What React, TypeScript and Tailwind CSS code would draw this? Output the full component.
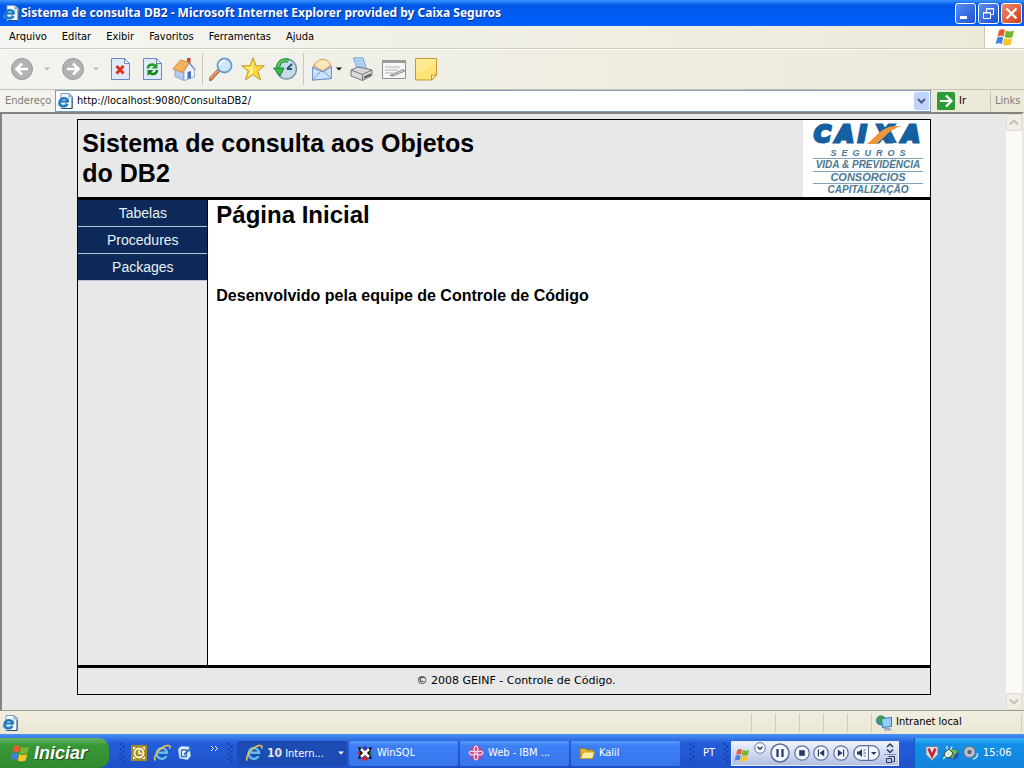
import { useState } from 'react';
import type { ReactNode } from 'react';

const menus = ['Arquivo', 'Editar', 'Exibir', 'Favoritos', 'Ferramentas', 'Ajuda'];
const links = ['Tabelas', 'Procedures', 'Packages'];

function IePageIcon({ className }: { className?: string }) {
  return (
    <svg viewBox="0 0 16 16" className={className} aria-hidden="true">
      <path d="M4 .5h8l3.500 3.500v11.500h-11.500z" fill="#f4f9ff" stroke="#7d9cc4" />
      <path d="M12 .5v3.500h3.500z" fill="#bcd2ee" stroke="#5f82b0" strokeWidth=".7" />
      <path d="M15 5v10.500H5" fill="none" stroke="#274c86" />
      <ellipse cx="6.500" cy="9" rx="6" ry="2.600" fill="none" stroke="#5cb8ee" strokeWidth="1" transform="rotate(-32 6.500 9)" />
      <path d="M10.500 11a4.200 4.200 0 1 1 .3-2.500H4" fill="none" stroke="#1b73b8" strokeWidth="2.200" />
    </svg>
  );
}

function IeIcon() {
  return (
    <svg viewBox="0 0 18 18" className="size-[18px] shrink-0" aria-hidden="true">
      <path d="M13.500 12a5.300 5.300 0 1 1 .6-3.300H5.500" fill="none" stroke="#1c4f9e" strokeWidth="3.800" />
      <path d="M13.500 12a5.300 5.300 0 1 1 .6-3.300H5.500" fill="none" stroke="#62bdf5" strokeWidth="2.500" />
      <path d="M2.500 16.500C-.5 14 6 3.500 14 1.600c3-.7 3.500 1 2.500 3.200" fill="none" stroke="#f0c24c" strokeWidth="1.500" />
    </svg>
  );
}

function WindowsFlag({ className }: { className?: string }) {
  return (
    <svg viewBox="0 0 20 18" className={className} aria-hidden="true">
      <path d="M4 2.500C6 .8 8 .8 10 2L8.500 8.500C6.500 7.300 4.500 7.500 2.500 8.700z" fill="#ea5a2c" />
      <path d="M11 2.500c2.500 1.300 5 1.200 8 0L17.500 9c-2.800 1.300-5.500 1.200-8-.1z" fill="#77b52e" />
      <path d="M2.200 9.800C4.400 8.500 6.300 8.600 8.300 9.700L6.800 16C4.800 14.800 2.700 15 .6 16.300z" fill="#3f83de" />
      <path d="M9.200 10.100c2.600 1.300 5.200 1.300 8 0l-1.500 6.400c-2.700 1.300-5.400 1.200-8-.1z" fill="#f5c32c" />
    </svg>
  );
}

function ToolButton({ label, children }: { label: string; children: ReactNode }) {
  return (
    <button type="button" aria-label={label} className="size-6 shrink-0">
      <svg viewBox="0 0 24 24" className="size-6">
        {children}
      </svg>
    </button>
  );
}

function Arrow({ label, className, fill }: { label: string; className: string; fill: string }) {
  return (
    <button type="button" aria-label={label} className={className}>
      <svg viewBox="0 0 6 4" className="h-[4px] w-[6px]">
        <path d="M0 .5h6L3 3.500z" fill={fill} />
      </svg>
    </button>
  );
}

function Separator() {
  return <div className="mx-1.5 h-8 w-px bg-[#c9c7b8]" />;
}

function TitleBar() {
  return (
    <header className="flex h-[26px] items-center gap-0.5 bg-linear-to-b from-[#3a93ff] via-[#0057e8] via-20% to-[#0060fa] pr-0.5 pl-[3px]">
      <IePageIcon className="size-4 shrink-0" />
      <h1 className="flex-1 truncate font-['Noto_Sans','Open_Sans',sans-serif] text-[12px] leading-5 font-bold text-white [text-shadow:1px_1px_#0a2f8c]">
        Sistema de consulta DB2 - Microsoft Internet Explorer provided by Caixa Seguros
      </h1>
      <div className="flex gap-[2px]">
        <button type="button" aria-label="Minimizar" className="size-[21px] rounded-[3px] border border-white bg-linear-to-br from-[#5b8df5] to-[#1c4fd0]">
          <svg viewBox="0 0 19 19"><path d="M4 12h7v3H4z" fill="#fff" /></svg>
        </button>
        <button type="button" aria-label="Restaurar" className="size-[21px] rounded-[3px] border border-white bg-linear-to-br from-[#5b8df5] to-[#1c4fd0]">
          <svg viewBox="0 0 19 19" fill="none" stroke="#fff">
            <path d="M7.500 8V4.500h7v6H12M7 5h8" />
            <path d="M4.500 8.500h7v6h-7zM4 9h8" />
          </svg>
        </button>
        <button type="button" aria-label="Fechar" className="size-[21px] rounded-[3px] border border-white bg-linear-to-br from-[#ee8a6c] to-[#cf3a14]">
          <svg viewBox="0 0 19 19"><path d="M4.500 4.500l10 10M14.500 4.500l-10 10" stroke="#fff" strokeWidth="2.200" /></svg>
        </button>
      </div>
    </header>
  );
}

function MenuBar() {
  return (
    <div className="flex h-[23px] justify-between border-b border-[#d0cdbb] bg-linear-to-r from-[#f5f5f3] to-[#ece9d8]">
      <nav className="flex gap-[15px] pl-[9px]">
        {menus.map((m) => (
          <button key={m} type="button" className="text-[11px] leading-5">
            {m}
          </button>
        ))}
      </nav>
      <div className="flex w-10 items-center justify-center border-l border-[#c9c7b8] bg-white">
        <WindowsFlag className="h-[18px] w-5" />
      </div>
    </div>
  );
}

function ToolBar() {
  return (
    <div className="flex h-[41px] items-center border-t border-b border-t-white border-b-[#c5c2b2] bg-linear-to-r from-[#f3f3f0] to-[#ece9d8] pb-0.5 pl-[10px]">
      <ToolButton label="Voltar">
        <circle cx="12" cy="12" r="10.500" fill="#b3b3b3" stroke="#979797" />
        <path d="M18 12H7M12 6.500L6.500 12l5.500 5.500" fill="none" stroke="#fff" strokeWidth="2.600" />
      </ToolButton>
      <Arrow label="Histórico de voltar" className="flex w-[26px] items-center justify-center" fill="#bdbdb6" />
      <ToolButton label="Avançar">
        <circle cx="13" cy="12" r="10.500" fill="#b3b3b3" stroke="#979797" />
        <path d="M7 12h11M13 6.500l5.500 5.500-5.500 5.500" fill="none" stroke="#fff" strokeWidth="2.600" />
      </ToolButton>
      <Arrow label="Histórico de avançar" className="flex w-6 items-center justify-center" fill="#bdbdb6" />
      <div className="flex items-center gap-2">
        <ToolButton label="Parar">
          <path d="M3.500 1.500h13l5 5v16h-18z" fill="#dfeafc" stroke="#6d87c4" />
          <path d="M16.500 1.500v5h5z" fill="#fff" stroke="#6d87c4" />
          <path d="M8.500 9l7 7.500M15.500 9l-7 7.500" stroke="#e23219" strokeWidth="3" />
        </ToolButton>
        <ToolButton label="Atualizar">
          <path d="M3.500 1.500h13l5 5v16h-18z" fill="#dfeafc" stroke="#6d87c4" />
          <path d="M16.500 1.500v5h5z" fill="#fff" stroke="#6d87c4" />
          <path d="M8 11.500c0-4 4.500-5 7-3" fill="none" stroke="#22a01f" strokeWidth="2.500" />
          <path d="M17.500 5.500v6h-6z" fill="#22a01f" />
          <path d="M17 13c0 4-4.500 5-7 3" fill="none" stroke="#178215" strokeWidth="2.500" />
          <path d="M7.500 19v-6h6z" fill="#178215" />
        </ToolButton>
        <ToolButton label="Página inicial">
          <path d="M3 11.500l9 3v9L3 19.500z" fill="#b5c9ee" stroke="#8299c8" strokeWidth=".8" />
          <path d="M12 14l5-8 5.500 6v8L12 23.500z" fill="#eef4ff" stroke="#8299c8" strokeWidth=".8" />
          <path d="M15 1h3.500v6H15z" fill="#c5432b" />
          <path d="M.8 12L8.500 3l9 2.300L11 15.500z" fill="#f6b15c" stroke="#c9823a" strokeWidth=".8" />
          <path d="M17 5.500l6.300 7.500" stroke="#7f97c6" strokeWidth="1.600" />
          <path d="M15.500 15l3.500-1v7l-3.500 1.200z" fill="#4773b4" />
        </ToolButton>
      </div>
      <Separator />
      <div className="flex items-center gap-2">
        <ToolButton label="Pesquisar">
          <path d="M1.500 22L10 13" stroke="#a6653c" strokeWidth="4" strokeLinecap="round" />
          <path d="M1.500 21.500L9.500 13" stroke="#e79c6c" strokeWidth="2" strokeLinecap="round" />
          <circle cx="15.500" cy="8.500" r="7" fill="#c9e8fd" stroke="#6e9ccc" strokeWidth="1.800" />
          <path d="M11 8a5 5 0 0 1 5-4.500" fill="none" stroke="#fff" strokeWidth="2" />
        </ToolButton>
        <ToolButton label="Favoritos">
          <path d="M12 .8l3 8h8.300l-6.600 5.400 3 8.900L12 17.600l-7.700 5.500 3-8.900L.7 8.800H9z" fill="#ffd93b" stroke="#c7941c" />
          <path d="M12 4v12l-5 4 2.500-7L4 10h6z" fill="#fff08a" />
        </ToolButton>
        <ToolButton label="Histórico">
          <circle cx="13.500" cy="12" r="10" fill="#c7dce9" stroke="#7896a8" strokeWidth="1.500" />
          <path d="M14 12l5-5M14 12h5" stroke="#31546d" strokeWidth="1.800" />
          <path d="M15.500 4C10 1.500 5.500 5.500 5 10.500" fill="none" stroke="#168634" strokeWidth="4" />
          <path d="M15.500 4C10 1.500 5.500 5.500 5 10.500" fill="none" stroke="#5fcf5c" strokeWidth="2" />
          <path d="M.5 11h10.500L7 19z" fill="#3eb648" stroke="#168634" />
        </ToolButton>
      </div>
      <Separator />
      <ToolButton label="Correio">
        <path d="M2.500 10L12 2l9.500 7v12.500l-19 1.500z" fill="#b2d5fa" stroke="#6c90c8" />
        <path d="M4 9c2-5 6-7 10-6.500 4 .5 6 3 6.500 6L13 14z" fill="#fce7bd" stroke="#d59643" />
        <path d="M2.500 10.500L13 15l8.500-5.500v12l-19 1.500z" fill="#c9e3ff" stroke="#6c90c8" />
        <path d="M3 22.500l8-8.500M21 21l-7.500-7" stroke="#7a9bd0" />
      </ToolButton>
      <Arrow label="Opções de correio" className="flex w-4 items-center pl-0.5" fill="#000" />
      <div className="flex items-center gap-2">
        <ToolButton label="Imprimir">
          <path d="M3.500 1h9.500l3.500 11-9 1z" fill="#bcdcfa" stroke="#6f9fd0" />
          <path d="M6 4h6M7 7h6M8 9.500h6" stroke="#8bb9e4" />
          <path d="M1 13l7-3 14 3v5.500L12.500 23.500 1 19z" fill="#d9d9dd" stroke="#777" />
          <path d="M1 13l11.500 4.500L22 13M12.500 17.500v6" fill="none" stroke="#777" />
          <path d="M14 19.500l7-3v2l-7 3z" fill="#555" />
        </ToolButton>
        <ToolButton label="Editar">
          <path d="M.5 3.500h23v18H.5z" fill="#f7f7f5" stroke="#8e8e8c" />
          <path d="M0 3h24v3H0z" fill="#9b9b9b" />
          <path d="M3 10h15M3 13h13M3 16h8" stroke="#b2b2b0" />
          <path d="M8 18.500l13-6 2 1.500-12 5z" fill="#d5d5d5" stroke="#777" strokeWidth=".8" />
        </ToolButton>
        <ToolButton label="Discutir">
          <path d="M1.500 1.500h21V18l-5 5h-16z" fill="#ffe275" stroke="#c49a2e" />
          <path d="M2 2h20v5L2 17z" fill="#fff0a0" opacity=".6" />
          <path d="M17.500 23v-5h5z" fill="#fff3a8" stroke="#c49a2e" />
        </ToolButton>
      </div>
    </div>
  );
}

function AddressBar() {
  const [url, setUrl] = useState('http://localhost:9080/ConsultaDB2/');
  return (
    <form className="flex h-[22px] items-center bg-linear-to-r from-[#f3f3f0] to-[#ece9d8]" onSubmit={(e) => e.preventDefault()}>
      <label htmlFor="address" className="w-[55px] pl-[5px] text-[11px] leading-5 text-[#7f7c73]">
        Endereço
      </label>
      <div className="flex h-[22px] flex-1 items-center gap-1 border border-[#7f9db9] bg-white pr-px pl-px">
        <IePageIcon className="size-4 shrink-0" />
        <input
          id="address"
          value={url}
          onChange={(e) => setUrl(e.target.value)}
          className="min-w-0 flex-1 text-[11px] leading-5 outline-none"
        />
        <button type="button" aria-label="Endereços recentes" className="h-[18px] w-[15px] rounded-[2px] bg-[#c1d3fb]">
          <svg viewBox="0 0 15 18"><path d="M4 7l3.500 3.500L11 7" fill="none" stroke="#4d6185" strokeWidth="2" /></svg>
        </button>
      </div>
      <button type="submit" className="flex w-[59px] items-center gap-1 pl-[6px] text-[11px] leading-5">
        <svg viewBox="0 0 18 18" className="size-[18px]">
          <rect width="18" height="18" rx="1.500" fill="#2c9a35" />
          <path d="M3 9h11M9 3.500L14.500 9 9 14.500" fill="none" stroke="#fff" strokeWidth="2.200" />
        </svg>
        Ir
      </button>
      <div className="w-[34px] border-l border-[#c5c2b2] pl-1 text-[11px] leading-5 text-[#7f7c73]">Links</div>
    </form>
  );
}

function CaixaLogo() {
  return (
    <svg viewBox="0 0 127 77" className="h-[77px] w-[127px] shrink-0 bg-white" role="img" aria-label="Caixa Seguros">
      <defs>
        <linearGradient id="caixa" x1="0" y1="0" x2="0" y2="1">
          <stop offset="0" stopColor="#1f7fc4" />
          <stop offset="1" stopColor="#0c4590" />
        </linearGradient>
      </defs>
      <g fontFamily="DejaVu Sans, sans-serif" fontWeight="700" fontStyle="italic" fontSize="23" fill="url(#caixa)" stroke="#13609f" strokeWidth="3">
        <text x="11" y="22">C</text>
        <text x="33" y="22">A</text>
        <text x="55" y="22">I</text>
        <text x="72" y="22">X</text>
        <text x="99" y="22">A</text>
      </g>
      <path d="M64 24c8-6 14-17 27-18h7c-10 3-15 10-21 15l-4 3z" fill="#f0953a" />
      <path d="M84 14l4-3 6 12h-6z" fill="#1a68a8" />
      <g fill="#4b7790" fontFamily="Liberation Sans, Arial, sans-serif" fontWeight="700" fontStyle="italic" textAnchor="middle">
        <text x="65" y="36" fontSize="9">S&#160; E&#160; G&#160; U&#160; R&#160; O&#160; S</text>
        <text x="65" y="48" fontSize="10">VIDA &amp; PREVIDÊNCIA</text>
        <text x="65" y="61" fontSize="11">CONSÓRCIOS</text>
        <text x="65" y="73" fontSize="10">CAPITALIZAÇÃO</text>
      </g>
      <path d="M10 38.500h110M10 51.500h110M10 63.500h110" stroke="#7fa3b8" />
    </svg>
  );
}

function ConsultaPage() {
  return (
    <div className="flex flex-1 pt-[5px] pb-[15px]">
      <div className="mx-auto flex w-[85%] flex-col border border-black bg-[#e8e8e8] font-['Liberation_Sans',Arial,sans-serif]">
        <div className="flex justify-between border-b-3 border-black">
          <h2 className="w-[400px] pt-2 pl-1 text-[25px] leading-[30px] font-bold">
            Sistema de consulta aos Objetos do DB2
          </h2>
          <CaixaLogo />
        </div>
        <div className="flex flex-1">
          <nav className="w-[130px] shrink-0 border-r border-black text-center">
            {links.map((l) => (
              <a
                key={l}
                href="#"
                className="block border-b border-[#b8c4d8] bg-[#0d2859] text-[14px] leading-[26px] text-[#e8f4f8]"
              >
                {l}
              </a>
            ))}
          </nav>
          <main className="flex-1 bg-white pl-2">
            <h2 className="text-[24px] leading-[30px] font-bold">Página Inicial</h2>
            <p className="mt-14 text-[16px] leading-5 font-bold">Desenvolvido pela equipe de Controle de Código</p>
          </main>
        </div>
        <footer className="border-t-3 border-black pl-6 text-center font-['DejaVu_Sans',Verdana,sans-serif] text-[11px] leading-[26px]">
          © 2008 GEINF - Controle de Código.
        </footer>
      </div>
    </div>
  );
}

function ScrollBar() {
  return (
    <div className="flex w-4 flex-col justify-between bg-[#fbfaf8]">
      <button type="button" aria-label="Rolar para cima" className="h-[17px] rounded-[2px] border border-[#dedbd0] bg-[#f0eee6]">
        <svg viewBox="0 0 14 15"><path d="M3 9.500L7 5.500l4 4" fill="none" stroke="#c4c2b8" strokeWidth="2" /></svg>
      </button>
      <button type="button" aria-label="Rolar para baixo" className="h-[17px] rounded-[2px] border border-[#dedbd0] bg-[#f0eee6]">
        <svg viewBox="0 0 14 15"><path d="M3 5.500l4 4 4-4" fill="none" stroke="#c4c2b8" strokeWidth="2" /></svg>
      </button>
    </div>
  );
}

function StatusBar() {
  return (
    <div className="flex h-6 items-center border-t border-[#9d9a8c] bg-linear-to-b from-[#f1eee0] to-[#ebe7d5] pr-0.5 pl-[2px]">
      <IePageIcon className="size-4" />
      <div className="flex-1" />
      {[1, 2, 3, 4, 5].map((n) => (
        <div key={n} className="h-[18px] w-6 border-l border-[#cfccbb]" />
      ))}
      <div className="flex h-[18px] w-[151px] items-center gap-[3px] border-x border-[#cfccbb] pl-1 text-[11px]">
        <svg viewBox="0 0 17 16" className="h-4 w-[17px]" aria-hidden="true">
          <circle cx="5" cy="5.500" r="5" fill="#2f7fc0" />
          <path d="M1 3c2-3 5-3 6-1L5 5l1 4c-3 0-5-2-5-6z" fill="#3fa648" />
          <path d="M5.500 3.500l10-1v9l-9 1z" fill="#8fd0f6" stroke="#3d6fb5" />
          <path d="M8 13h6l2 2.500H8z" fill="#9ba9c6" />
        </svg>
        Intranet local
      </div>
    </div>
  );
}

function Grip() {
  return (
    <svg viewBox="0 0 6 20" className="h-5 w-1.5 shrink-0" aria-hidden="true">
      <path d="M1.500 0v20" stroke="#163f9f" strokeWidth="2" strokeDasharray="2 3" />
      <path d="M4.500 2.500v18" stroke="#163f9f" strokeWidth="2" strokeDasharray="2 3" />
    </svg>
  );
}

function TaskButton({ label, icon }: { label: string; icon: ReactNode }) {
  return (
    <button
      type="button"
      className="flex h-[25px] w-[109px] items-center gap-1 rounded-[2px] bg-linear-to-b from-[#5a98fb] via-[#3c7ff5] via-20% to-[#3775ea] pl-2 text-[11px] text-white"
    >
      {icon}
      <span className="truncate">{label}</span>
    </button>
  );
}

function MediaButton({ label, className, children }: { label: string; className: string; children: ReactNode }) {
  return (
    <button type="button" aria-label={label} className={className}>
      <svg viewBox="0 0 20 20">
        <circle cx="10" cy="10" r="9" fill="#f2f6ff" stroke="#5c6f9e" strokeWidth="1.500" />
        {children}
      </svg>
    </button>
  );
}

function MediaBar() {
  return (
    <div className="flex h-[25px] w-[168px] items-center justify-between border border-[#e7edfa] bg-linear-to-b from-[#eef2fc] to-[#b4c1e2] px-0.5">
      <WindowsFlag className="mt-1 h-3.5 w-4" />
      <MediaButton label="Menu" className="size-3 self-start">
        <path d="M6 8l4 4 4-4" fill="none" stroke="#29385f" strokeWidth="2.500" />
      </MediaButton>
      <MediaButton label="Pausar" className="size-5">
        <path d="M7.500 6v8M12.500 6v8" stroke="#29385f" strokeWidth="2.200" />
      </MediaButton>
      <MediaButton label="Parar" className="size-4">
        <path d="M6.500 6.500h7v7h-7z" fill="#29385f" />
      </MediaButton>
      <MediaButton label="Anterior" className="size-4">
        <path d="M14 5.500v9L8 10zM6 5.500h1.500v9H6z" fill="#29385f" />
      </MediaButton>
      <MediaButton label="Próxima" className="size-4">
        <path d="M6 5.500v9l6-4.500zM12.500 5.500H14v9h-1.500z" fill="#29385f" />
      </MediaButton>
      <button type="button" aria-label="Volume" className="h-4 w-[27px]">
        <svg viewBox="0 0 27 16">
          <rect x=".7" y=".7" width="25.600" height="14.600" rx="7.300" fill="#f2f6ff" stroke="#5c6f9e" strokeWidth="1.300" />
          <path d="M4 6.500h2L9 4v8L6 9.500H4z" fill="#29385f" />
          <path d="M10.500 6l2-1.500M10.500 8h2.500M10.500 10l2 1.500" stroke="#29385f" strokeWidth=".8" />
          <path d="M15.500 1v14" stroke="#5c6f9e" />
          <path d="M18 7h5.500l-2.700 3z" fill="#29385f" />
        </svg>
      </button>
      <button type="button" aria-label="Restaurar player" className="h-[23px] w-3">
        <svg viewBox="0 0 12 23" fill="none" stroke="#29385f">
          <path d="M3 5l3-3 3 3M3 7.500l3 3 3-3" strokeWidth="1.500" />
          <path d="M0 12.500h12" stroke="#8292bb" />
          <path d="M4.500 14.500h6v5h-2M2.500 16.500h5v4h-5z" />
        </svg>
      </button>
    </div>
  );
}

function TaskBar() {
  return (
    <footer className="flex h-[34px] items-center bg-linear-to-b from-[#4a92f5] via-[#245edb] via-25% to-[#1e50c8] text-white">
      <button
        type="button"
        className="flex h-[30px] w-[109px] shrink-0 items-center gap-1 self-end rounded-r-[10px] bg-linear-to-b from-[#66b464] via-[#389838] via-25% to-[#2f8b30] pl-[10px] font-['Liberation_Sans',Arial,sans-serif] text-[18px] font-bold italic [text-shadow:1px_1px_1px_#1b4d1b]"
      >
        <WindowsFlag className="h-[18px] w-5" />
        Iniciar
      </button>
      <div className="flex items-center pt-1 pl-2.5">
        <Grip />
        <div className="flex items-center gap-1.5 pl-1.5">
          <button type="button" aria-label="Outlook">
            <svg viewBox="0 0 16 16" className="size-4">
              <path d="M0 0h16v16H0z" fill="#a38a1c" />
              <path d="M2 2h3L2 5zM14 2v3l-3-3zM2 14v-3l3 3zM14 14h-3l3-3z" fill="#fffbe0" />
              <circle cx="8" cy="8" r="4.500" fill="#a38a1c" stroke="#fffbe0" strokeWidth="1.800" />
              <path d="M8 5v3.500h3" fill="none" stroke="#fffbe0" strokeWidth="1.500" />
            </svg>
          </button>
          <button type="button" aria-label="Internet Explorer">
            <IeIcon />
          </button>
          <button type="button" aria-label="Mostrar área de trabalho">
            <svg viewBox="0 0 16 16" className="size-4">
              <path d="M1.500 4L4 1.500l8 .5 1.500 9-3 3.500-8-1.500z" fill="#e6f2fd" stroke="#9cc3ee" />
              <path d="M4.500 5h5v6.500h-5z" fill="#fff" stroke="#2a6fc0" strokeWidth="1.300" />
              <path d="M7 9.500l7-6.500" stroke="#3a6fae" strokeWidth="1.800" />
            </svg>
          </button>
        </div>
        <button type="button" aria-label="Mais ícones" className="w-[34px]">
          <svg viewBox="0 0 34 20" fill="none" stroke="#fff"><path d="M18 3l2.500 2.500L18 8M22 3l2.500 2.500L22 8" /></svg>
        </button>
        <Grip />
      </div>
      <div className="flex gap-0.5 pt-1 pl-1">
        <button type="button" className="flex h-[25px] w-[110px] items-center gap-1 rounded-[2px] bg-[#1c4bb4] pl-2 text-[11px]">
          <IeIcon />
          <span>
            <b className="text-[12px] text-[#e8e3d8]">10</b> Intern...
          </span>
          <svg viewBox="0 0 6 4" className="ml-2.5 h-1 w-1.5"><path d="M0 .5h6L3 3.500z" fill="#fff" /></svg>
        </button>
        <TaskButton
          label="WinSQL"
          icon={
            <svg viewBox="0 0 16 16" className="size-4 shrink-0">
              <path d="M1 2l5 1 2 3 2-3 5-1-2 6 2 6-5-1-2-3-2 3-5 1 2-6z" fill="#111" />
              <path d="M4 4l8 8M12 4l-8 8" stroke="#fff" strokeWidth="2.500" />
              <circle cx="8" cy="3" r="2" fill="#3a3ac0" />
              <path d="M5.500 12h5v3.500h-5z" fill="#d2232a" />
              <circle cx="2" cy="8" r="1.500" fill="#d2232a" />
              <circle cx="14" cy="8" r="1.500" fill="#2c8a3c" />
            </svg>
          }
        />
        <TaskButton
          label="Web - IBM ..."
          icon={
            <svg viewBox="0 0 16 16" className="size-4 shrink-0">
              <circle cx="8" cy="8" r="7.500" fill="#a04fa5" />
              <g fill="#d24f8c" stroke="#fff">
                <ellipse cx="8" cy="4" rx="2" ry="3" />
                <ellipse cx="8" cy="12" rx="2" ry="3" />
                <ellipse cx="4" cy="8" rx="3" ry="2" />
                <ellipse cx="12" cy="8" rx="3" ry="2" />
              </g>
            </svg>
          }
        />
        <TaskButton
          label="Kalil"
          icon={
            <svg viewBox="0 0 16 16" className="size-4 shrink-0">
              <path d="M1 3.500h5l1.500 1.500H14v8.500H1.500z" fill="#e5b93f" stroke="#a87c18" />
              <path d="M1.500 13.500L4 7h11.500l-2 6.500z" fill="#fff0a0" stroke="#c89a2a" />
            </svg>
          }
        />
      </div>
      <div className="flex flex-1 items-center justify-end pt-1">
        <Grip />
        <span className="w-7 text-center text-[11px]">PT</span>
        <Grip />
        <div className="pl-0.5">
          <MediaBar />
        </div>
      </div>
      <div className="ml-[15px] flex h-[30px] w-[110px] shrink-0 items-center gap-1 self-end border-l border-[#0d5cc0] bg-linear-to-b from-[#39b2f5] via-[#1290e9] via-20% to-[#1183dc] pl-2.5">
        <svg viewBox="0 0 14 16" className="h-4 w-3.5" aria-hidden="true">
          <path d="M1 1.500h12v8L7 15.500 1 9.500z" fill="#d9dde6" stroke="#777f96" />
          <path d="M3.500 3.500L7 11l3.500-7.500" fill="none" stroke="#c9202c" strokeWidth="2.500" />
        </svg>
        <svg viewBox="0 0 16 16" className="size-4" aria-hidden="true">
          <circle cx="10.500" cy="9" r="5.500" fill="#2a54b8" />
          <path d="M8 5c3-2 6 0 7 2l-4 3-1 4c-3-2-4-6-2-9z" fill="#62c43d" />
          <path d="M2 7l4-3 4 4-2 4-4 1-3-3z" fill="#dce8dc" stroke="#2d4a35" />
          <path d="M4 4.500V1M7.500 5L9 1.500M2.500 11.500L0 14" stroke="#dce8dc" strokeWidth="1.500" />
        </svg>
        <svg viewBox="0 0 16 16" className="size-4" aria-hidden="true">
          <circle cx="6.500" cy="7" r="6" fill="#aab4c4" stroke="#59647a" />
          <circle cx="6.500" cy="7" r="3" fill="#5c677a" stroke="#e5e9f0" />
          <path d="M10 14c3-.5 4.500-3 4.500-6" fill="none" stroke="#c5d8ec" strokeWidth="1.500" />
        </svg>
        <time className="text-[11px]">15:06</time>
      </div>
    </footer>
  );
}

export default function App() {
  return (
    <div className="flex min-h-screen flex-col bg-[#ece9d8] font-['DejaVu_Sans_Condensed',Tahoma,'Noto_Sans',sans-serif] text-black">
      <TitleBar />
      <MenuBar />
      <ToolBar />
      <AddressBar />
      <div className="flex flex-1 border-t-2 border-r-2 border-l-2 border-[#85847c] border-r-[#ece9d8] bg-[#e8e8e8]">
        <ConsultaPage />
        <ScrollBar />
      </div>
      <StatusBar />
      <TaskBar />
    </div>
  );
}
